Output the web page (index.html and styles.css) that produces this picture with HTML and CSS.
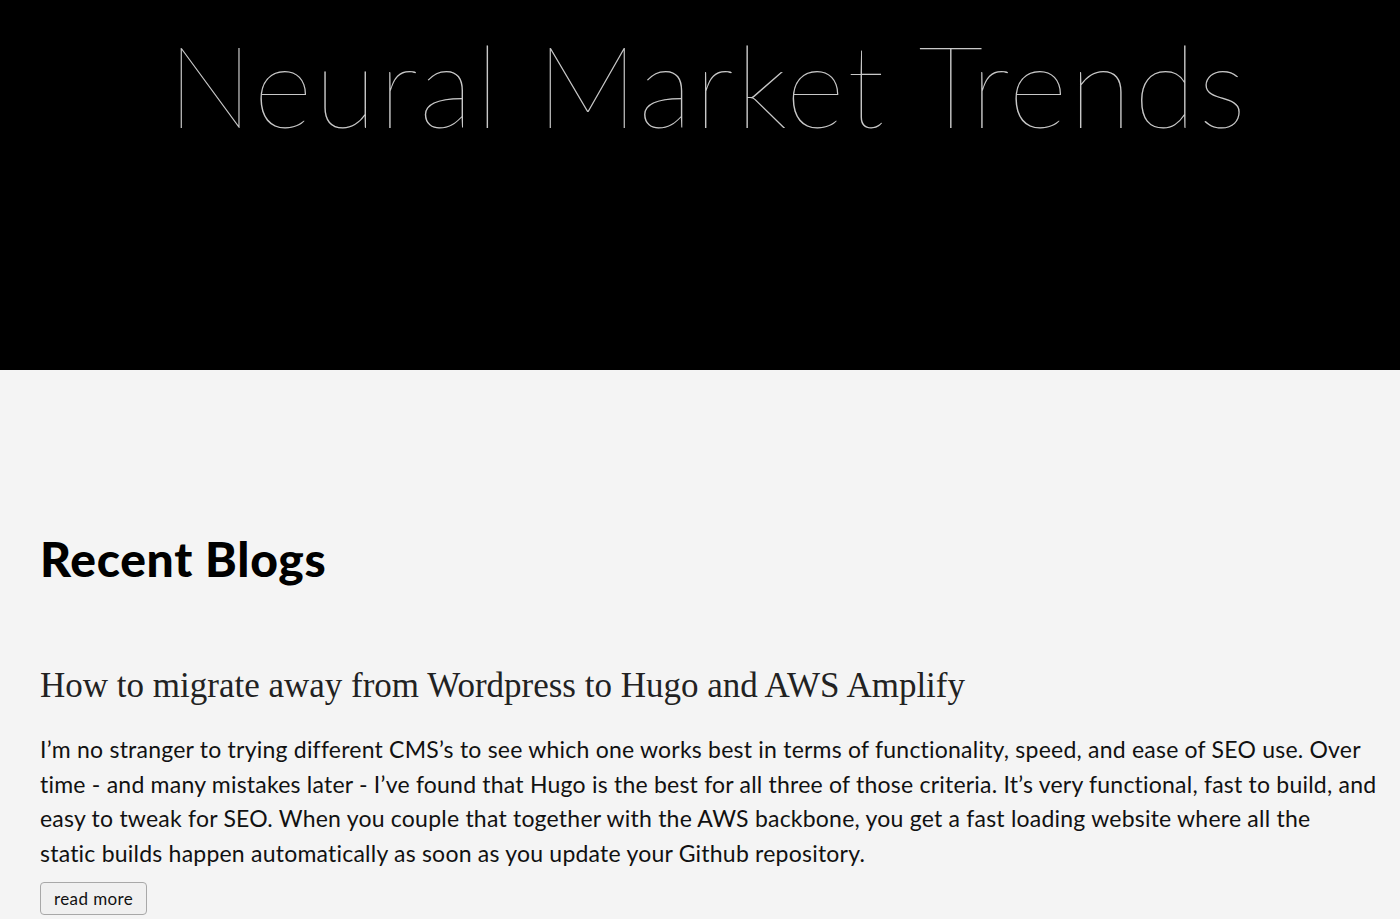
FILE: index.html
```html
<!DOCTYPE html>
<html lang="en">
<head>
<meta charset="utf-8">
<title>Neural Market Trends</title>
<link rel="stylesheet" href="styles.css">
</head>
<body>
<header class="hero">
  <h1 class="site-title">Neural Market Trends</h1>
</header>
<main class="content">
  <h2 class="section-title">Recent Blogs</h2>
  <article class="post">
    <h3 class="post-title">How to migrate away from Wordpress to Hugo and AWS Amplify</h3>
    <p class="post-excerpt">I’m no stranger to trying different CMS’s to see which one works best in terms of functionality, speed, and ease of SEO use. Over time - and many mistakes later - I’ve found that Hugo is the best for all three of those criteria. It’s very functional, fast to build, and easy to tweak for SEO. When you couple that together with the AWS backbone, you get a fast loading website where all the<br>static builds happen automatically as soon as you update your Github repository.</p>
    <button class="read-more">read more</button>
  </article>
</main>
</body>
</html>
```
FILE: styles.css
```css
html, body {
  margin: 0;
  padding: 0;
}
body {
  background: #f4f4f4;
  font-family: Lato, "Noto Sans", sans-serif;
  color: #111;
}
.hero {
  background: #000;
  height: 370px;
  display: flex;
  justify-content: center;
  padding-left: 16px;
  box-sizing: border-box;
}
.site-title {
  margin: 14px 0 0;
  font-family: Lato, sans-serif;
  font-weight: 100;
  font-size: 114px;
  line-height: 140px;
  letter-spacing: 2.4px;
  color: #c8c8c8;
}
.content {
  padding: 158px 14px 0 40px;
}
.section-title {
  margin: 0;
  font-family: Lato, sans-serif;
  font-weight: 900;
  font-size: 48px;
  line-height: 62px;
  letter-spacing: 0.7px;
  color: #000;
}
.post {
  margin-top: 74px;
}
.post-title {
  margin: 0;
  font-family: "Liberation Serif", serif;
  font-weight: normal;
  font-size: 35px;
  line-height: 44px;
  color: #222;
}
.post-excerpt {
  margin: 24px 0 12px;
  font-size: 23px;
  line-height: 34.5px;
  letter-spacing: 0.22px;
  color: #111;
}
.read-more {
  font-family: Lato, sans-serif;
  font-size: 17px;
  letter-spacing: 0.4px;
  padding: 5px 13px;
  background: #f0f0f0;
  border: 1px solid #a8a8a8;
  border-radius: 4px;
  color: #111;
}
```
